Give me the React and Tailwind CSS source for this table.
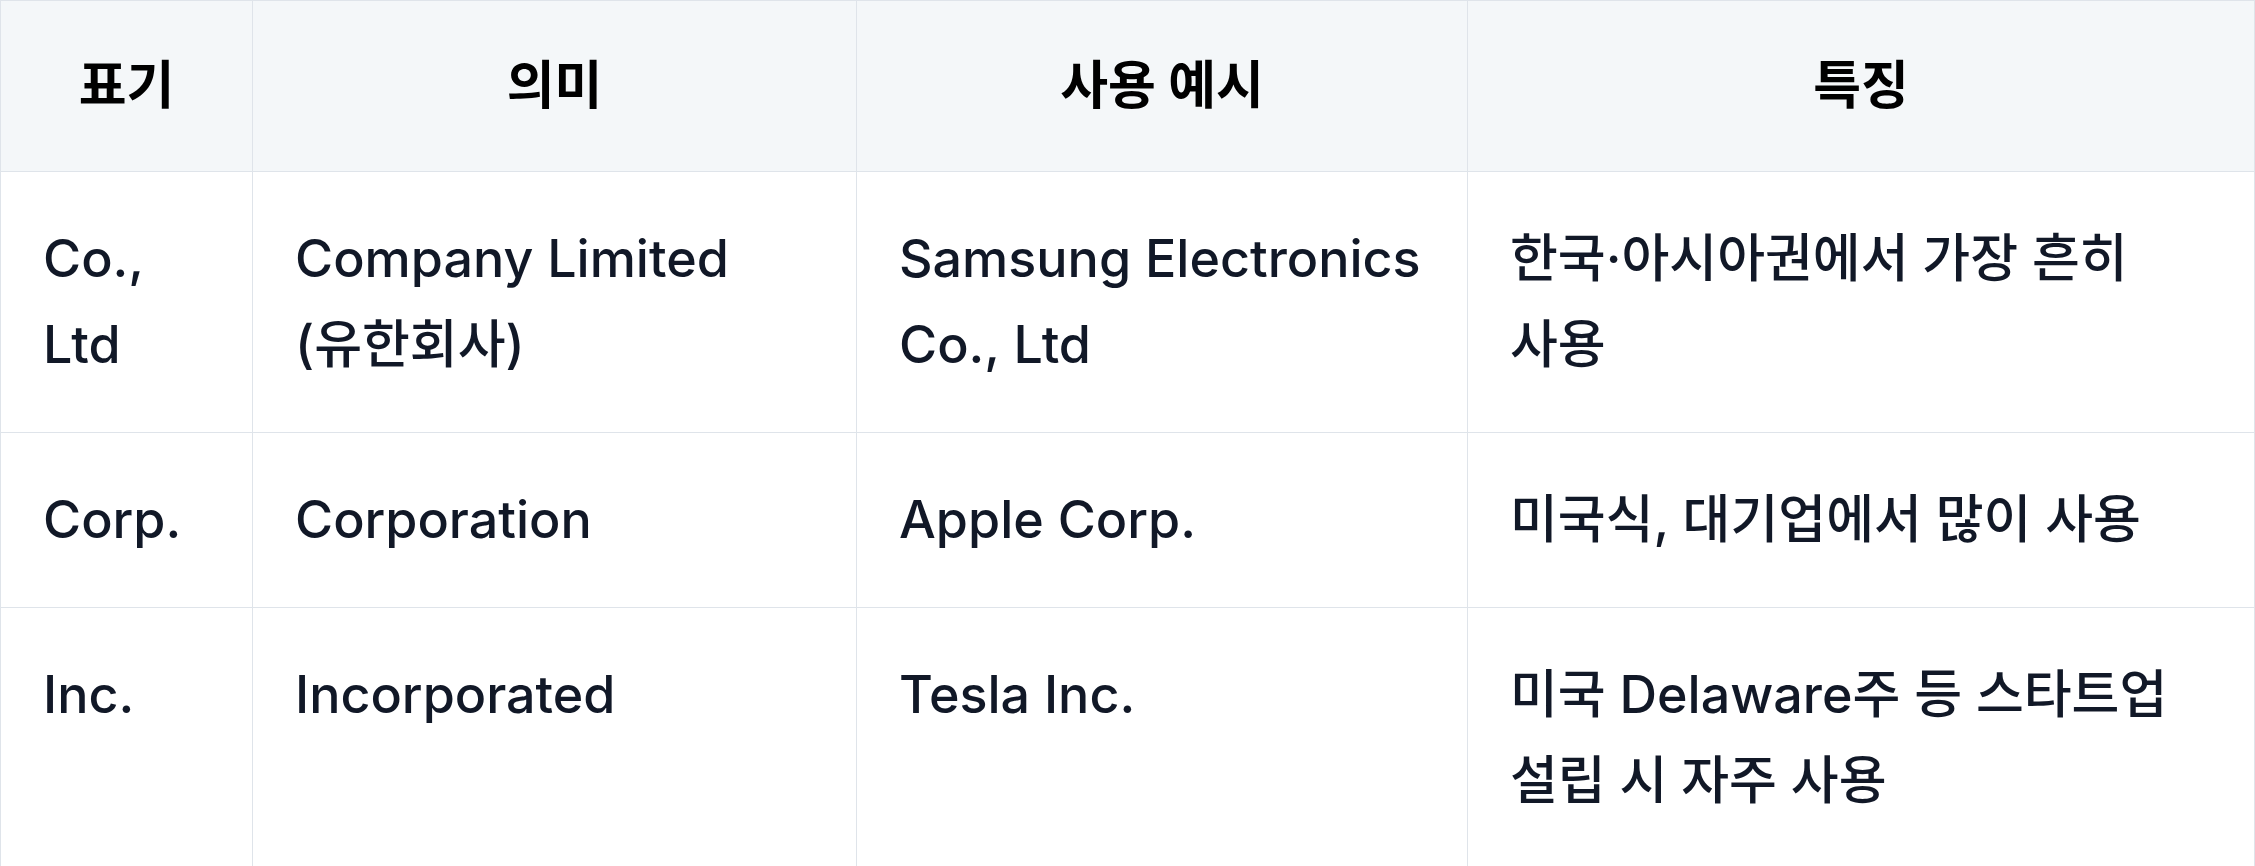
const rows = [
  {
    mark: 'Co., Ltd',
    meaning: 'Company Limited (유한회사)',
    example: 'Samsung Electronics Co., Ltd',
    note: '한국·아시아권에서 가장 흔히 사용',
  },
  {
    mark: 'Corp.',
    meaning: 'Corporation',
    example: 'Apple Corp.',
    note: '미국식, 대기업에서 많이 사용',
  },
  {
    mark: 'Inc.',
    meaning: 'Incorporated',
    example: 'Tesla Inc.',
    note: '미국 Delaware주 등 스타트업 설립 시 자주 사용',
  },
]

const cell = 'border border-[#dfe4ea] px-[42px] align-top break-keep'

export default function App() {
  return (
    <div
      className="w-[2255px] bg-white text-[#111827]"
      style={{ fontFamily: 'Inter, "Noto Sans CJK KR", sans-serif' }}
    >
      <table className="w-full table-fixed border-collapse text-[52px] leading-[86px]">
        <colgroup>
          <col className="w-[252px]" />
          <col className="w-[604px]" />
          <col className="w-[611px]" />
          <col />
        </colgroup>
        <thead>
          <tr className="bg-[#f4f7f9]">
            {['표기', '의미', '사용 예시', '특징'].map(h => (
              <th key={h} className={`${cell} py-[42px] text-center font-bold text-black`}>
                {h}
              </th>
            ))}
          </tr>
        </thead>
        <tbody>
          {rows.map(r => (
            <tr key={r.mark} className="font-medium">
              <td className={`${cell} py-[44px]`}>{r.mark}</td>
              <td className={`${cell} py-[44px]`}>{r.meaning}</td>
              <td className={`${cell} py-[44px]`}>{r.example}</td>
              <td className={`${cell} py-[44px]`}>{r.note}</td>
            </tr>
          ))}
        </tbody>
      </table>
    </div>
  )
}
